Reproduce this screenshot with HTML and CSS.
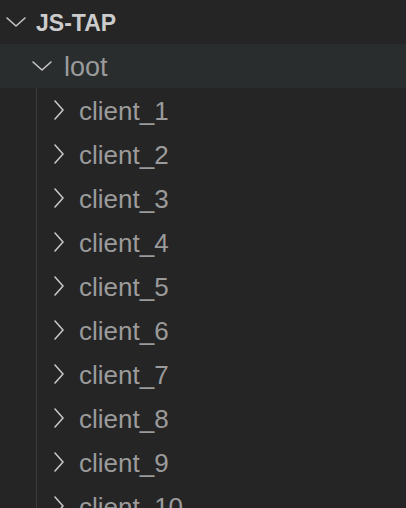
FILE: index.html
```html
<!DOCTYPE html>
<html>
<head>
<meta charset="utf-8">
<link rel="stylesheet" href="styles.css">
</head>
<body>
<div class="tree">
  <div class="row header">
    <svg class="tw-down" width="20" height="10" viewBox="0 0 20 10"><path d="M1 1 L10 9 L19 1" /></svg>
    <span class="label title">JS-TAP</span>
  </div>
  <div class="row folder open">
    <svg class="tw-down" width="20" height="10" viewBox="0 0 20 10"><path d="M1 1 L10 9 L19 1" /></svg>
    <span class="label loot">loot</span>
  </div>
  <div class="children">
    <div class="row child"><svg class="tw-right" width="10" height="20" viewBox="0 0 10 20"><path d="M1 1 L9 10 L1 19" /></svg><span class="label name">client_1</span></div>
    <div class="row child"><svg class="tw-right" width="10" height="20" viewBox="0 0 10 20"><path d="M1 1 L9 10 L1 19" /></svg><span class="label name">client_2</span></div>
    <div class="row child"><svg class="tw-right" width="10" height="20" viewBox="0 0 10 20"><path d="M1 1 L9 10 L1 19" /></svg><span class="label name">client_3</span></div>
    <div class="row child"><svg class="tw-right" width="10" height="20" viewBox="0 0 10 20"><path d="M1 1 L9 10 L1 19" /></svg><span class="label name">client_4</span></div>
    <div class="row child"><svg class="tw-right" width="10" height="20" viewBox="0 0 10 20"><path d="M1 1 L9 10 L1 19" /></svg><span class="label name">client_5</span></div>
    <div class="row child"><svg class="tw-right" width="10" height="20" viewBox="0 0 10 20"><path d="M1 1 L9 10 L1 19" /></svg><span class="label name">client_6</span></div>
    <div class="row child"><svg class="tw-right" width="10" height="20" viewBox="0 0 10 20"><path d="M1 1 L9 10 L1 19" /></svg><span class="label name">client_7</span></div>
    <div class="row child"><svg class="tw-right" width="10" height="20" viewBox="0 0 10 20"><path d="M1 1 L9 10 L1 19" /></svg><span class="label name">client_8</span></div>
    <div class="row child"><svg class="tw-right" width="10" height="20" viewBox="0 0 10 20"><path d="M1 1 L9 10 L1 19" /></svg><span class="label name">client_9</span></div>
    <div class="row child"><svg class="tw-right" width="10" height="20" viewBox="0 0 10 20"><path d="M1 1 L9 10 L1 19" /></svg><span class="label name">client_10</span></div>
  </div>
</div>
</body>
</html>
```
FILE: styles.css
```css
html, body {
  margin: 0;
  padding: 0;
  background: #252526;
  height: 100%;
  overflow: hidden;
}
.tree {
  font-family: "Liberation Sans", Arial, sans-serif;
  display: flex;
  flex-direction: column;
}
.row {
  height: 44px;
  display: flex;
  align-items: center;
  flex-shrink: 0;
}
.label {
  padding-top: 2px;
}
svg path {
  fill: none;
  stroke: #c5c5c5;
  stroke-width: 1.6;
  stroke-linecap: round;
  stroke-linejoin: round;
}
.header {
  padding-left: 6px;
}
.title {
  margin-left: 10px;
  font-weight: bold;
  font-size: 23px;
  color: #cccccc;
}
.folder {
  background: #2a2d2e;
  padding-left: 32px;
}
.loot {
  margin-left: 12px;
  font-size: 27px;
  color: #9b9b9b;
}
.children {
  margin-left: 36px;
  border-left: 1px solid #3c3c3c;
  display: flex;
  flex-direction: column;
}
.child {
  padding-left: 17px;
}
.name {
  margin-left: 15px;
  font-size: 26px;
  color: #9b9b9b;
}
```
